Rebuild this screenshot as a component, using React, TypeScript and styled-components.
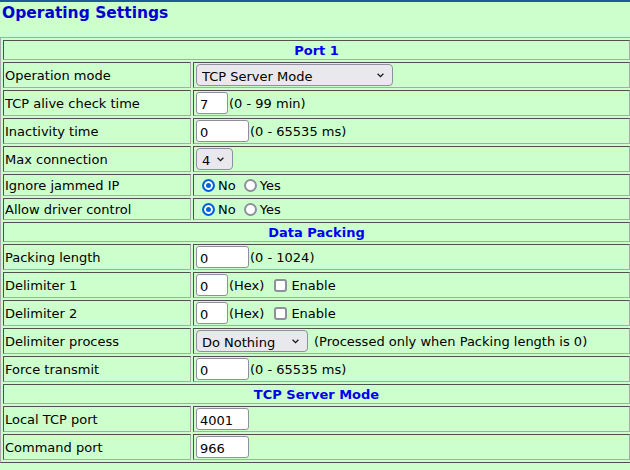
import React from "react";
import styled, { createGlobalStyle } from "styled-components";

const GlobalStyle = createGlobalStyle`
  html, body {
    margin: 0;
    padding: 0;
    background: #ccffcc;
    overflow: hidden;
  }
  body {
    font-family: "DejaVu Sans", Verdana, sans-serif;
    font-size: 13px;
    color: #000;
  }
`;

const FONT = `"DejaVu Sans", Verdana, sans-serif`;

const Page = styled.div`
  border-top: 2px solid #1f5a96;
  width: 630px;
  height: 468px;
  background: #ccffcc;
`;

const Title = styled.h1`
  margin: 0;
  box-sizing: border-box;
  height: 35px;
  padding: 2px 0 0 2px;
  font: bold 15.5px/19px ${FONT};
  color: #0000d0;
`;

const Table = styled.table`
  width: 633px;
  border-collapse: separate;
  border-spacing: 2px;
  border: 1px solid;
  border-color: #aaaaaa #505050 #505050 #aaaaaa;
  font: 13px/16px ${FONT};
`;

const Cell = styled.td`
  border: 1px solid;
  border-color: #505050 #aaaaaa #aaaaaa #505050;
  padding: 1px;
  vertical-align: middle;
  white-space: nowrap;
`;

const LabelCell = styled(Cell)`
  box-sizing: border-box;
  width: 188px;
  padding: 2px 1px 0 1px;
  color: #000;
`;

const ValueCell = styled(Cell)``;

const HeaderCell = styled(Cell)`
  text-align: center;
  font-weight: bold;
  color: #0000f0;
  height: 16px;
  padding: 2px 1px 0 1px;
`;

const Field = styled.div<{ $h?: number }>`
  display: flex;
  align-items: center;
  height: ${(p) => p.$h ?? 22}px;
`;

const TextInput = styled.input<{ $w: number }>`
  box-sizing: border-box;
  width: ${(p) => p.$w}px;
  height: 22px;
  margin: 0 0 0 1px;
  padding: 2px 0 0 3px;
  border: 1px solid #8f8f9d;
  border-radius: 3px;
  background: #fff;
  font: 13px ${FONT};
  color: #000;
  outline: none;
`;

const Note = styled.span<{ $gap?: number }>`
  margin-left: ${(p) => p.$gap ?? 1}px;
  padding-top: 2px;
  color: #000;
`;

const SelectWrap = styled.span<{ $w: number }>`
  position: relative;
  display: inline-flex;
  width: ${(p) => p.$w}px;
  height: 22px;
  margin-left: 1px;
`;

const Select = styled.select`
  appearance: none;
  -webkit-appearance: none;
  box-sizing: border-box;
  width: 100%;
  height: 100%;
  margin: 0;
  padding: 2px 0 0 5px;
  border: 1px solid #8f8f9d;
  border-radius: 4px;
  background: #e9e9ed;
  font: 13px ${FONT};
  color: #000;
  outline: none;
`;

const Chevron = styled.svg`
  position: absolute;
  right: 9px;
  top: 9px;
  pointer-events: none;
`;

const Radio = styled.input.attrs({ type: "radio" })<{ $ml: number }>`
  appearance: none;
  -webkit-appearance: none;
  box-sizing: border-box;
  width: 13px;
  height: 13px;
  margin: 1px 3px 0 ${(p) => p.$ml}px;
  border: 2px solid #8f8f9d;
  border-radius: 50%;
  background: #fff;
  &:checked {
    border-color: #0060df;
    background: #0060df;
    box-shadow: inset 0 0 0 2px #fff;
  }
`;

const Checkbox = styled.input.attrs({ type: "checkbox" })`
  appearance: none;
  -webkit-appearance: none;
  box-sizing: border-box;
  width: 13px;
  height: 13px;
  margin: 1px 4px 0 10px;
  border: 2px solid #8f8f9d;
  border-radius: 3px;
  background: #fff;
`;

const DropSelect: React.FC<{ w: number; value: string; options: string[] }> = ({ w, value, options }) => (
  <SelectWrap $w={w}>
    <Select defaultValue={value}>
      {options.map((o) => (
        <option key={o}>{o}</option>
      ))}
    </Select>
    <Chevron width="7" height="5" viewBox="0 0 7 5">
      <path d="M0.6 0.8 L3.5 3.7 L6.4 0.8" fill="none" stroke="#1a1a1a" strokeWidth="1.3" />
    </Chevron>
  </SelectWrap>
);

const RadioPair: React.FC<{ name: string }> = ({ name }) => (
  <Field $h={18}>
    <Radio name={name} $ml={7} defaultChecked />
    <Note $gap={0}>No</Note>
    <Radio name={name} $ml={8} />
    <Note $gap={0}>Yes</Note>
  </Field>
);

const Header: React.FC<{ children: React.ReactNode }> = ({ children }) => (
  <tr>
    <HeaderCell colSpan={2}>{children}</HeaderCell>
  </tr>
);

const Row: React.FC<{ label: string; children: React.ReactNode }> = ({ label, children }) => (
  <tr>
    <LabelCell>{label}</LabelCell>
    <ValueCell>{children}</ValueCell>
  </tr>
);

const Input: React.FC<{ w: number; v: string; note?: string }> = ({ w, v, note }) => (
  <Field>
    <TextInput $w={w} defaultValue={v} />
    {note && <Note>{note}</Note>}
  </Field>
);

const Delim: React.FC = () => (
  <Field>
    <TextInput $w={32} defaultValue="0" />
    <Note>(Hex)</Note>
    <Checkbox />
    <Note $gap={0}>Enable</Note>
  </Field>
);

export default function App() {
  return (
    <>
      <GlobalStyle />
      <Page>
        <Title>Operating Settings</Title>
        <Table>
          <tbody>
            <Header>Port 1</Header>
            <Row label="Operation mode">
              <Field>
                <DropSelect
                  w={197}
                  value="TCP Server Mode"
                  options={["Disable", "Real COM Mode", "TCP Server Mode", "TCP Client Mode", "UDP Mode"]}
                />
              </Field>
            </Row>
            <Row label="TCP alive check time">
              <Input w={32} v="7" note="(0 - 99 min)" />
            </Row>
            <Row label="Inactivity time">
              <Input w={53} v="0" note="(0 - 65535 ms)" />
            </Row>
            <Row label="Max connection">
              <Field>
                <DropSelect w={37} value="4" options={["1", "2", "3", "4"]} />
              </Field>
            </Row>
            <Row label="Ignore jammed IP">
              <RadioPair name="ignore" />
            </Row>
            <Row label="Allow driver control">
              <RadioPair name="driver" />
            </Row>
            <Header>Data Packing</Header>
            <Row label="Packing length">
              <Input w={53} v="0" note="(0 - 1024)" />
            </Row>
            <Row label="Delimiter 1">
              <Delim />
            </Row>
            <Row label="Delimiter 2">
              <Delim />
            </Row>
            <Row label="Delimiter process">
              <Field>
                <DropSelect
                  w={112}
                  value="Do Nothing"
                  options={["Do Nothing", "Delimiter+1", "Delimiter+2", "Strip Delimiter"]}
                />
                <Note $gap={6}>(Processed only when Packing length is 0)</Note>
              </Field>
            </Row>
            <Row label="Force transmit">
              <Input w={53} v="0" note="(0 - 65535 ms)" />
            </Row>
            <Header>TCP Server Mode</Header>
            <Row label="Local TCP port">
              <Input w={53} v="4001" />
            </Row>
            <Row label="Command port">
              <Input w={53} v="966" />
            </Row>
          </tbody>
        </Table>
      </Page>
    </>
  );
}
